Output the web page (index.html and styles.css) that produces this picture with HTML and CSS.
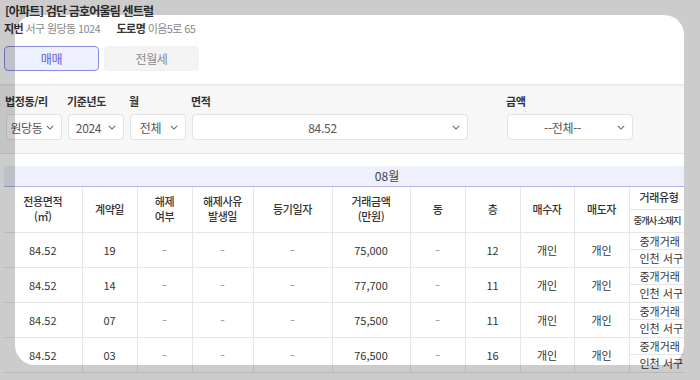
FILE: index.html
```html
<!DOCTYPE html>
<html lang="ko">
<head>
    <meta charset="UTF-8">
    <meta name="viewport" content="width=device-width, initial-scale=1.0">
    <title>실거래가 조회</title>
    <link rel="stylesheet" href="styles.css">
</head>
<body>
    <div class="page">
        <div class="head">
            <h1 class="title">[아파트] 검단 금호어울림 센트럴</h1>
            <p class="addr"><b>지번</b> 서구 원당동 1024 <b class="road">도로명</b> 이음5로 65</p>
            <div class="tabs">
                <button class="tab active">매매</button>
                <button class="tab">전월세</button>
            </div>
        </div>

        <div class="filters">
            <div class="field f-small">
                <label>법정동/리</label>
                <div class="select"><span>원당동</span><svg viewBox="0 0 10 6"><path d="M1 1l4 4 4-4"/></svg></div>
            </div>
            <div class="field f-small">
                <label>기준년도</label>
                <div class="select"><span>2024</span><svg viewBox="0 0 10 6"><path d="M1 1l4 4 4-4"/></svg></div>
            </div>
            <div class="field f-small">
                <label>월</label>
                <div class="select"><span>전체</span><svg viewBox="0 0 10 6"><path d="M1 1l4 4 4-4"/></svg></div>
            </div>
            <div class="field f-area">
                <label>면적</label>
                <div class="select"><span>84.52</span><svg viewBox="0 0 10 6"><path d="M1 1l4 4 4-4"/></svg></div>
            </div>
            <div class="field f-price">
                <label>금액</label>
                <div class="select"><span>--전체--</span><svg viewBox="0 0 10 6"><path d="M1 1l4 4 4-4"/></svg></div>
            </div>
        </div>

        <div class="result">
            <div class="month">08월</div>
            <table>
                <colgroup>
                    <col style="width:78px"><col style="width:55px"><col style="width:55px"><col style="width:61px">
                    <col style="width:79px"><col style="width:78px"><col style="width:55px"><col style="width:55px">
                    <col style="width:54px"><col style="width:55px"><col style="width:141px">
                </colgroup>
                <thead>
                    <tr class="h1">
                        <th rowspan="2">전용면적<br>(㎡)</th>
                        <th rowspan="2">계약일</th>
                        <th rowspan="2">해제<br>여부</th>
                        <th rowspan="2">해제사유<br>발생일</th>
                        <th rowspan="2">등기일자</th>
                        <th rowspan="2">거래금액<br>(만원)</th>
                        <th rowspan="2">동</th>
                        <th rowspan="2">층</th>
                        <th rowspan="2">매수자</th>
                        <th rowspan="2">매도자</th>
                        <th class="side">거래유형</th>
                    </tr>
                    <tr class="h2">
                        <th class="side small">중개사 소재지</th>
                    </tr>
                </thead>
                <tbody id="rows"></tbody>
            </table>
        </div>
    </div>

    <div class="spotlight"></div>

    <script>
        const deals = [
            ['84.52', '19', '75,000', '12'],
            ['84.52', '14', '77,700', '11'],
            ['84.52', '07', '75,500', '11'],
            ['84.52', '03', '76,500', '16']
        ];

        let html = '';
        for (let d of deals) {
            html += `<tr class="r1">
                <td rowspan="2">${d[0]}</td>
                <td rowspan="2">${d[1]}</td>
                <td rowspan="2" class="dash">-</td>
                <td rowspan="2" class="dash">-</td>
                <td rowspan="2" class="dash">-</td>
                <td rowspan="2">${d[2]}</td>
                <td rowspan="2" class="dash">-</td>
                <td rowspan="2">${d[3]}</td>
                <td rowspan="2">개인</td>
                <td rowspan="2">개인</td>
                <td class="side">중개거래</td>
            </tr>
            <tr class="r2"><td class="side">인천 서구</td></tr>`;
        }
        document.getElementById('rows').innerHTML = html;
    </script>
</body>
</html>
```

FILE: styles.css
```css
body {
    margin: 0;
    font-family: "Noto Sans CJK KR", "Noto Sans", sans-serif;
    color: #333;
    background-color: #fff;
    overflow: hidden;
}

.page {
    width: 684px;
    overflow: hidden;
}

.head {
    padding: 3px 4px 0;
}

.title {
    margin: 0;
    padding-left: 1px;
    font-size: 12px;
    font-weight: 700;
    line-height: 16px;
    letter-spacing: -0.8px;
    color: #333;
}

.addr {
    margin: 1px 0 0;
    font-size: 11px;
    line-height: 16px;
    letter-spacing: -0.6px;
    color: #888;
}

.addr b {
    color: #333;
}

.addr .road {
    margin-left: 14px;
}

.tabs {
    display: flex;
    gap: 5px;
    margin-top: 10px;
}

.tab {
    width: 95px;
    height: 25px;
    padding: 0;
    border: 1px solid #f1f1f1;
    border-radius: 4px;
    background-color: #f3f3f3;
    color: #8a8a8a;
    font-family: inherit;
    font-size: 12px;
    letter-spacing: -0.4px;
}

.tab.active {
    border-color: #8b8be0;
    background-color: #eef0fd;
    color: #5c5cd6;
}

.filters {
    display: flex;
    gap: 6px;
    margin-top: 13px;
    padding: 9px 0 13px 6px;
    background-color: #f7f7f7;
    border-top: 1px solid #e6e6e6;
    border-bottom: 1px solid #e6e6e6;
    box-shadow: inset 0 1px 2px rgba(0, 0, 0, 0.04);
}

.field label {
    display: block;
    margin: 0 0 5px -1px;
    font-size: 11px;
    font-weight: 700;
    line-height: 15px;
    letter-spacing: -0.4px;
    color: #333;
}

.f-small { width: 56px; }
.f-area { width: 276px; }
.f-price { width: 126px; margin-left: 33px; }

.select {
    display: flex;
    align-items: center;
    height: 26px;
    box-sizing: border-box;
    padding: 0 7px 0 2px;
    background-color: #fff;
    border: 1px solid #e2e2e2;
    border-radius: 4px;
    font-size: 12px;
    letter-spacing: -0.3px;
    color: #555;
}

.select span {
    flex: 1;
    text-align: center;
    white-space: nowrap;
}

.select svg {
    width: 8px;
    height: 5px;
    margin-left: 2px;
    fill: none;
    stroke: #666;
    stroke-width: 1.3;
}

.result {
    margin: 12px 0 0 4px;
}

.month {
    width: 766px;
    height: 20px;
    line-height: 20px;
    background-color: #eef0fb;
    border-bottom: 1px solid #b4b4e4;
    text-align: center;
    font-size: 12px;
    color: #444;
}

table {
    width: 766px;
    table-layout: fixed;
    border-collapse: collapse;
}

th, td {
    padding: 0;
    border: 1px solid #e6e6e6;
    text-align: center;
    font-size: 11px;
    white-space: nowrap;
    overflow: hidden;
}

tr > :first-child {
    border-left: none;
}

thead tr:first-child th {
    border-top: none;
}

th {
    font-weight: 500;
    line-height: 15px;
    letter-spacing: -0.4px;
    color: #333;
}

td {
    line-height: 14px;
    color: #333;
}

.side {
    text-align: left;
    padding-left: 10px;
}

th.small {
    padding-left: 4px;
    font-size: 9.5px;
    letter-spacing: -1.2px;
}

.h1 { height: 22px; }
.h2 { height: 23px; }
.r1 { height: 17px; }
.r2 { height: 18px; }

.dash {
    font-size: 13px;
    color: #999;
}

.spotlight {
    position: absolute;
    left: 15px;
    top: 15px;
    width: 669px;
    height: 350px;
    border-radius: 20px;
    box-shadow: 0 0 0 1000px rgba(0, 0, 0, 0.2);
    pointer-events: none;
}
```
